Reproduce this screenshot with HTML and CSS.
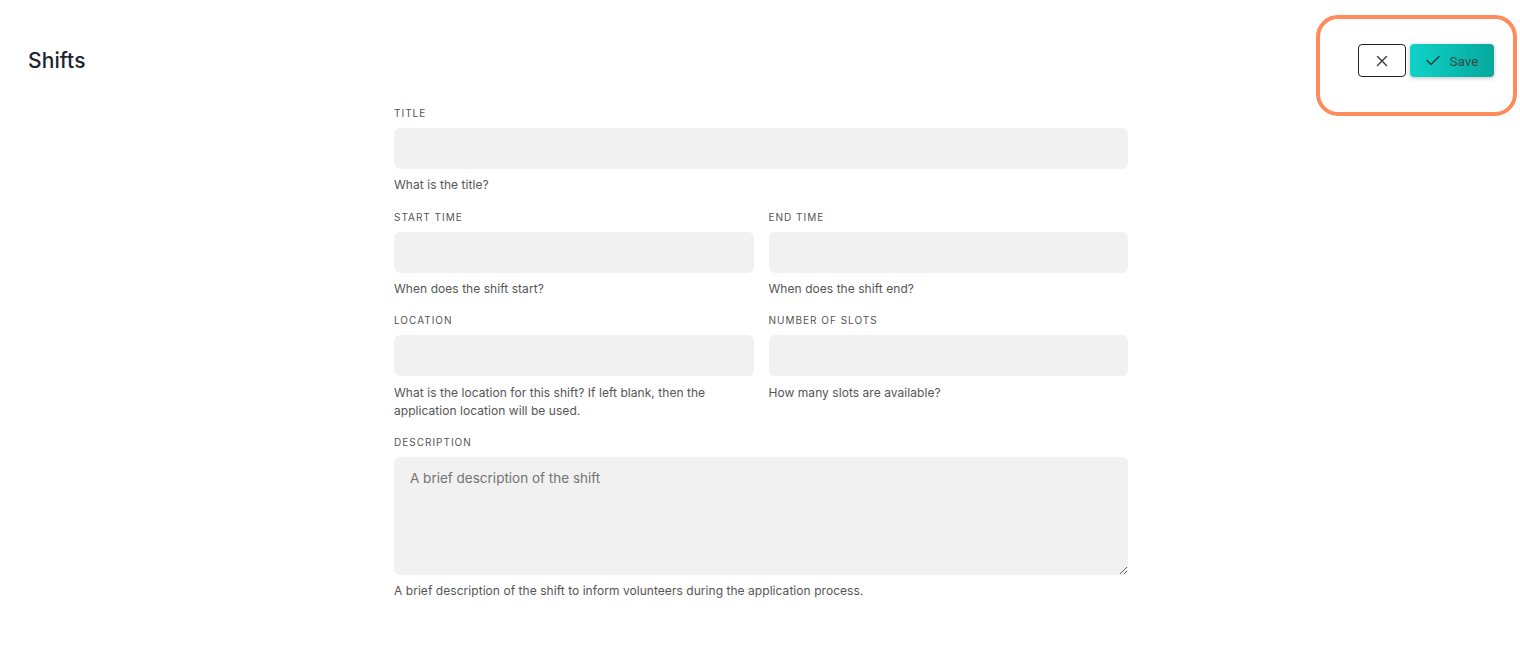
FILE: index.html
```html
<!DOCTYPE html>
<html lang="en">
<head>
<meta charset="utf-8">
<title>Shifts</title>
<link rel="stylesheet" href="styles.css">
</head>
<body>
<div class="page">
  <header class="topbar">
    <h1 class="page-title">Shifts</h1>
    <div class="actions">
      <button class="btn-cancel" type="button" aria-label="Cancel">
        <svg width="12" height="12" viewBox="0 0 12 12"><path d="M1.5 1.5 L10.5 10.5 M10.5 1.5 L1.5 10.5" stroke="#333" stroke-width="1.3" fill="none" stroke-linecap="round"/></svg>
      </button>
      <button class="btn-save" type="button">
        <svg width="14" height="11" viewBox="0 0 14 11"><path d="M1 5.5 L5 9.5 L13 1.5" stroke="#333" stroke-width="1.3" fill="none" stroke-linecap="round" stroke-linejoin="round"/></svg>
        <span>Save</span>
      </button>
    </div>
  </header>
  <form class="form">
    <div class="field full">
      <label class="label">Title</label>
      <input class="input" type="text">
      <p class="help help-first">What is the title?</p>
    </div>
    <div class="row">
      <div class="field">
        <label class="label">Start Time</label>
        <input class="input" type="text">
        <p class="help">When does the shift start?</p>
      </div>
      <div class="field">
        <label class="label">End Time</label>
        <input class="input" type="text">
        <p class="help">When does the shift end?</p>
      </div>
    </div>
    <div class="row">
      <div class="field">
        <label class="label">Location</label>
        <input class="input" type="text">
        <p class="help help-two">What is the location for this shift? If left blank, then the application location will be used.</p>
      </div>
      <div class="field">
        <label class="label">Number of Slots</label>
        <input class="input" type="text">
        <p class="help help-two">How many slots are available?</p>
      </div>
    </div>
    <div class="field full">
      <label class="label">Description</label>
      <textarea class="textarea" placeholder="A brief description of the shift"></textarea>
      <p class="help">A brief description of the shift to inform volunteers during the application process.</p>
    </div>
  </form>
</div>
</body>
</html>
```
FILE: styles.css
```css
*, *::before, *::after { box-sizing: border-box; }
html, body { margin: 0; padding: 0; background: #fff; }
body { font-family: "Inter", sans-serif; color: #222; }
.page { position: relative; padding: 0 26px 0 28px; }
.topbar {
  display: flex;
  justify-content: space-between;
  align-items: flex-start;
  height: 106px;
  position: relative;
}
.page-title {
  margin: 48px 0 0 0;
  font-family: "Inter", sans-serif;
  font-size: 21px;
  line-height: 26px;
  font-weight: 500;
  color: #1d2430;
  letter-spacing: 0.1px;
}
.actions {
  display: flex;
  gap: 4px;
  align-items: center;
  margin-top: 44px;
  position: relative;
}
.actions::before {
  content: "";
  position: absolute;
  left: -42px;
  top: -29px;
  width: 201px;
  height: 101px;
  border: 4px solid #ff8a5c;
  border-radius: 22px;
  pointer-events: none;
}
.btn-cancel {
  width: 48px;
  height: 33px;
  border: 1px solid #222;
  border-radius: 4px;
  background: #fff;
  display: flex;
  align-items: center;
  justify-content: center;
  padding: 0;
  cursor: pointer;
}
.btn-save {
  width: 84px;
  height: 33px;
  border: none;
  border-radius: 4px;
  background: linear-gradient(90deg, #0fd3c8 0%, #06a89d 100%);
  box-shadow: 0 1px 4px rgba(0,0,0,0.25);
  display: flex;
  align-items: center;
  justify-content: center;
  gap: 10px;
  font-family: "Roboto", sans-serif;
  font-size: 13.5px;
  color: #37484a;
  padding: 0;
  cursor: pointer;
}
.form {
  width: 734px;
  margin: 0 auto;
  position: relative;
  display: flex;
  flex-direction: column;
}
.row {
  display: grid;
  grid-template-columns: 1fr 1fr;
  column-gap: 15px;
}
.field { display: flex; flex-direction: column; }
.label {
  font-size: 10px;
  letter-spacing: 1px;
  text-transform: uppercase;
  color: #555;
  line-height: 14px;
  margin: 0 0 8px 0;
}
.input {
  height: 41px;
  border: none;
  border-radius: 6px;
  background: #f1f1f1;
  font: inherit;
  padding: 0 16px;
  outline: none;
}
.textarea {
  height: 118px;
  border: none;
  border-radius: 6px;
  background: #f1f1f1;
  font-family: "Inter", sans-serif;
  font-size: 13.5px;
  padding: 13px 16px;
  resize: vertical;
  outline: none;
  color: #333;
}
.textarea::placeholder { color: #737373; }
.help {
  font-size: 12px;
  color: #555;
  line-height: 18px;
  margin: 7px 0 15px 0;
  letter-spacing: 0.05px;
}
.help-first { margin-bottom: 16px; }
.help-two { margin-top: 8px; }
```
